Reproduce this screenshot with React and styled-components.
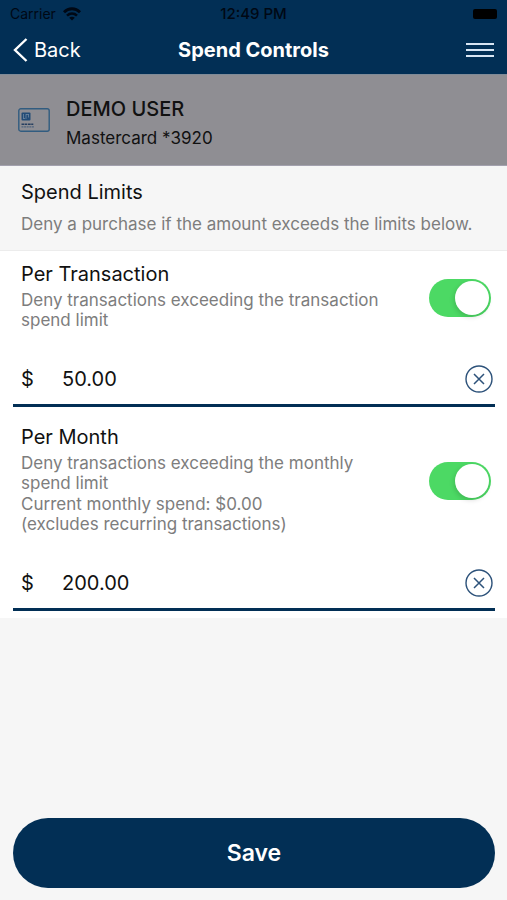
import React, { useState } from "react";
import styled, { createGlobalStyle } from "styled-components";

const App = () => {
  const [limits, setLimits] = useState({
    transaction: { enabled: true, amount: "50.00" },
    month: { enabled: true, amount: "200.00" },
  });

  const updateLimit = (name, change) =>
    setLimits({ ...limits, [name]: { ...limits[name], ...change } });

  return (
    <Screen>
      <GlobalStyle />
      <TopBar>
        <StatusBar>
          <Carrier>
            Carrier
            <WifiIcon />
          </Carrier>
          <time>12:49 PM</time>
          <Battery />
        </StatusBar>
        <NavBar>
          <BackButton type="button">
            <svg width="16" height="26" viewBox="0 0 16 26" fill="none">
              <path d="M13.5 2 L2 13 L13.5 24" stroke="#fff" strokeWidth="2.4" />
            </svg>
            Back
          </BackButton>
          <h1>Spend Controls</h1>
          <MenuButton type="button" aria-label="Menu">
            <svg width="28" height="16" viewBox="0 0 28 16">
              <path d="M0 2H28M0 8H28M0 14H28" stroke="#d8e5f3" strokeWidth="2" />
            </svg>
          </MenuButton>
        </NavBar>
      </TopBar>

      <Account>
        <CardIcon />
        <div>
          <h2>DEMO USER</h2>
          <p>Mastercard *3920</p>
        </div>
      </Account>

      <Intro>
        <h2>Spend Limits</h2>
        <p>Deny a purchase if the amount exceeds the limits below.</p>
      </Intro>

      <main>
        <LimitSection
          id="transaction"
          title="Per Transaction"
          limit={limits.transaction}
          onChange={(change) => updateLimit("transaction", change)}
        >
          <p>Deny transactions exceeding the transaction spend limit</p>
        </LimitSection>
        <LimitSection
          id="month"
          title="Per Month"
          limit={limits.month}
          onChange={(change) => updateLimit("month", change)}
        >
          <p>Deny transactions exceeding the monthly spend limit</p>
          <p>
            Current monthly spend: $0.00
            <br />
            (excludes recurring transactions)
          </p>
        </LimitSection>
      </main>

      <Footer>
        <SaveButton type="button">Save</SaveButton>
      </Footer>
    </Screen>
  );
};

const LimitSection = ({ id, title, limit, onChange, children }) => (
  <Section>
    <SectionTop>
      <Description>
        <label htmlFor={`${id}-switch`}>{title}</label>
        {children}
      </Description>
      <Toggle
        type="checkbox"
        role="switch"
        id={`${id}-switch`}
        checked={limit.enabled}
        onChange={(e) => onChange({ enabled: e.target.checked })}
      />
    </SectionTop>
    <AmountRow>
      <label htmlFor={`${id}-amount`}>$</label>
      <input
        id={`${id}-amount`}
        type="text"
        inputMode="decimal"
        aria-label={`${title} amount`}
        value={limit.amount}
        onChange={(e) => onChange({ amount: e.target.value })}
      />
      <ClearButton
        type="button"
        aria-label={`Clear ${title} amount`}
        onClick={() => onChange({ amount: "" })}
      >
        <svg width="28" height="28" viewBox="0 0 28 28" fill="none" stroke="#2d527a">
          <circle cx="14" cy="14" r="13" strokeWidth="1.4" />
          <path d="M9 9 L19 19 M19 9 L9 19" strokeWidth="1.5" />
        </svg>
      </ClearButton>
    </AmountRow>
  </Section>
);

const WifiIcon = () => (
  <svg width="18" height="14" viewBox="0 0 18 14" fill="none" stroke="#000814">
    <path d="M1 5.2 C5.5 0.6 12.5 0.6 17 5.2" strokeWidth="2.8" />
    <path d="M4 8.6 C7 5.8 11 5.8 14 8.6" strokeWidth="2.6" />
    <path d="M9 13.5 L6.2 10.7 C7.8 9.3 10.2 9.3 11.8 10.7 Z" fill="#000814" stroke="none" />
  </svg>
);

const CardIcon = () => (
  <svg width="32" height="24" viewBox="0 0 32 24" fill="none">
    <rect x="0.8" y="0.8" width="30.4" height="22.4" rx="2" stroke="#315c80" strokeWidth="1.4" />
    <rect x="3.5" y="4.5" width="9" height="8" rx="1" fill="#234c77" />
    <path d="M5.5 6v5M8 6v5M10.5 6v3.5M8 6.5h2.5M5.5 10.5h1.5" stroke="#7d91a6" strokeWidth="0.7" />
    <path d="M3.5 16.2h12.5" stroke="#263f60" strokeWidth="1.5" strokeDasharray="3 0.5 2 0.7" />
    <path d="M3.5 18.9h12.5" stroke="#405a79" strokeWidth="1" strokeDasharray="2 0.6" />
  </svg>
);

const GlobalStyle = createGlobalStyle`
  * {
    box-sizing: border-box;
    margin: 0;
    padding: 0;
  }
  body {
    background-color: #f6f6f6;
    color: #111;
    font-family: Inter, "Liberation Sans", sans-serif;
  }
  button, input {
    font-family: inherit;
    color: inherit;
    border: none;
    background: none;
  }
  button {
    cursor: pointer;
  }
  svg {
    display: block;
    flex-shrink: 0;
  }
`;

const Screen = styled.div`
  display: flex;
  flex-direction: column;
  min-height: 100vh;
`;

const TopBar = styled.header`
  background-color: #022f55;
`;

const StatusBar = styled.div`
  display: grid;
  grid-template-columns: 1fr auto 1fr;
  align-items: center;
  height: 27px;
  padding: 0 10px;
  font-size: 14px;
  color: #000814;
  time {
    font-size: 15px;
    font-weight: 500;
  }
`;

const Carrier = styled.span`
  display: flex;
  align-items: center;
  gap: 7px;
`;

const Battery = styled.span`
  justify-self: end;
  width: 24px;
  height: 10px;
  border-radius: 2px;
  background-color: #000;
`;

const NavBar = styled.nav`
  display: grid;
  grid-template-columns: 1fr auto 1fr;
  align-items: center;
  height: 47px;
  padding: 0 13px 2px;
  color: #fff;
  h1 {
    font-size: 20px;
    font-weight: 700;
  }
`;

const BackButton = styled.button`
  display: flex;
  align-items: center;
  gap: 5px;
  font-size: 20px;
`;

const MenuButton = styled.button`
  justify-self: end;
`;

const Account = styled.section`
  display: flex;
  align-items: center;
  gap: 16px;
  height: 92px;
  padding: 0 18px;
  background-color: #8f8e93;
  border-top: 1px solid #7f8b98;
  border-bottom: 1px solid #a3a1ae;
  h2 {
    padding-top: 6px;
    font-size: 20px;
    font-weight: 500;
    line-height: 30px;
  }
  p {
    font-size: 17px;
    line-height: 28px;
  }
`;

const Intro = styled.section`
  padding: 12px 21px 14px;
  border-bottom: 1px solid #ececec;
  h2 {
    font-size: 20px;
    font-weight: 400;
    line-height: 28px;
  }
  p {
    padding-top: 6px;
    font-size: 17px;
    line-height: 24px;
    color: #7d7d7d;
  }
`;

const Section = styled.section`
  padding: 10px 12px 7px 13px;
  background-color: #fff;
`;

const SectionTop = styled.div`
  display: flex;
  align-items: center;
  justify-content: space-between;
  padding: 0 4px 0 8px;
`;

const Description = styled.div`
  flex: 0 1 370px;
  padding-bottom: 4px;
  font-size: 17px;
  line-height: 20px;
  color: #7d7d7d;
  label {
    display: block;
    padding-bottom: 3px;
    font-size: 20px;
    line-height: 26px;
    color: #111;
  }
  p + p {
    padding-top: 1px;
  }
`;

const Toggle = styled.input`
  appearance: none;
  display: flex;
  flex-shrink: 0;
  width: 62px;
  height: 38px;
  padding: 2px;
  border-radius: 19px;
  background-color: #d8d8dc;
  cursor: pointer;
  &::before {
    content: "";
    width: 34px;
    height: 34px;
    border-radius: 50%;
    background-color: #fff;
    box-shadow: -1px 2px 5px rgba(0, 0, 0, 0.15);
  }
  &:checked {
    justify-content: flex-end;
    background-color: #4cd964;
  }
`;

const AmountRow = styled.div`
  display: flex;
  align-items: center;
  height: 51px;
  margin-top: 22px;
  padding: 0 2px 2px 8px;
  border-bottom: 3px solid #022f55;
  font-size: 20px;
  label {
    width: 41px;
  }
  input {
    flex: 1;
    min-width: 0;
    height: 32px;
    font-size: 20px;
    outline: none;
  }
`;

const ClearButton = styled.button`
  flex-shrink: 0;
`;

const Footer = styled.footer`
  margin-top: auto;
  padding: 12px 12px 12px 13px;
`;

const SaveButton = styled.button`
  width: 100%;
  height: 70px;
  border-radius: 35px;
  background-color: #022f55;
  color: #fff;
  font-size: 23px;
  font-weight: 600;
`;

export default App;
